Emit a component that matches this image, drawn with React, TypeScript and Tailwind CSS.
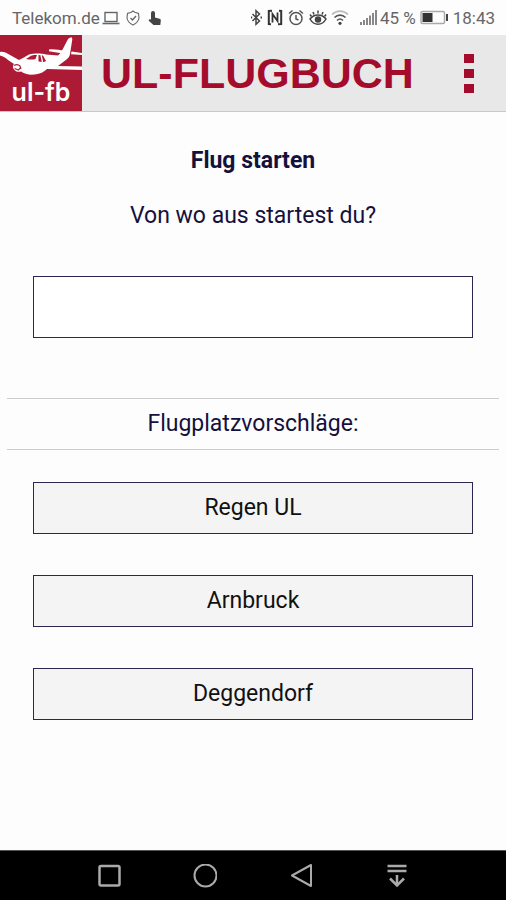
import React, { useState } from "react";

const AIRFIELDS = ["Regen UL", "Arnbruck", "Deggendorf"];

// ─── Status Bar ───────────────────────────────────────────────────────────────
function StatusBar() {
  return (
    <div className="flex items-center justify-between h-[35px] pl-3 pr-[11px] text-[17px] leading-[20px] text-[#666666]">
      <div className="flex items-center gap-[6px]">
        <span>Telekom.de</span>
        <svg className="w-[18px] h-[14px] -ml-1" viewBox="0 0 18 14" fill="none" stroke="currentColor">
          <rect x="3" y="1.5" width="12" height="9" strokeWidth="1.4" />
          <path d="M0.5 12.5h17" strokeWidth="1.6" />
        </svg>
        <svg className="w-[14px] h-[16px]" viewBox="0 0 14 16" fill="none" stroke="currentColor" strokeWidth="1.1">
          <path d="M7 1 8.8 2.3 12.5 3.5 13 8c-.5 3-3 5.500-6 7-3-1.500-5.500-4-6-7l.5-4.500 3.700-1.200z" />
          <path d="m4.500 8 2 2 3.500-4" strokeWidth="1.4" />
        </svg>
        <svg className="w-[14px] h-[16px] ml-[2px]" viewBox="0 0 14 16" fill="#444444">
          <path d="M3 3a2 2 0 0 1 4 0v4.500l4.500 1.300c1 .3 1.500 1 1.300 2L12.300 15H5.500L1 11c-.8-.9.2-2.200 1.200-1.700L3 9.700z" />
        </svg>
      </div>

      <div className="flex items-center">
        <svg className="w-[13px] h-[17px]" viewBox="0 0 13 17" fill="none" stroke="#444444" strokeWidth="1.5">
          <path d="m2.500 5 7 7-3.500 3.300V1.700L9.500 5l-7 7" />
          <path d="M1 8.500h1.200M10.500 8.500h1.500" strokeWidth="2" />
        </svg>
        <svg className="w-[16px] h-[17px] ml-1" viewBox="0 0 16 17" fill="none" stroke="#333333">
          <path d="M5 1.800 1.800 2v13l2.200.2M11 15.200l3.200-.2V2l-2.200-.2" strokeWidth="2" />
          <path d="M5.500 13.500V5l5 7V3.500" strokeWidth="1.800" />
        </svg>
        <svg className="w-[16px] h-[17px] ml-[5px]" viewBox="0 0 16 17" fill="none" stroke="#555555" strokeWidth="1.5">
          <circle cx="8" cy="9.500" r="6" />
          <path d="M1 4.500 4.500 1.500M15 4.500l-3.500-3M8 6v4l2.500 1" />
        </svg>
        <svg className="w-[18px] h-[17px] ml-[5px]" viewBox="0 0 18 17" fill="none" stroke="#444444" strokeWidth="1.5">
          <path d="M1 10c4-5.500 12-5.500 16 0-4 7-12 7-16 0z" />
          <path d="M9 1.500v3M4 3l1 2.500M14 3l-1 2.500M1 5.500l1.500 2M17 5.500l-1.500 2" />
          <circle cx="9" cy="10.500" r="2.500" fill="#444444" />
        </svg>
        <svg className="w-[18px] h-[17px] ml-1" viewBox="0 0 18 17" fill="none" strokeWidth="1.600">
          <path d="M1 5.500c4.500-4.500 11.500-4.500 16 0" stroke="#bbbbbb" />
          <path d="M3.500 8.500c3.200-3.200 7.800-3.200 11 0M6 11.500c1.800-1.800 4.200-1.800 6 0" stroke="#555555" />
          <circle cx="9" cy="14.300" r="1.600" fill="#444444" />
        </svg>
        <svg className="w-[18px] h-[17px] ml-[11px]" viewBox="0 0 18 17" fill="#888888">
          <path d="M0 13h2v3H0zM3 11h2v5H3zM6 9h2v7H6zM9 6.500h2V16H9zM12 4h2v12h-2zM15 1h2v15h-2z" />
        </svg>
        <span className="ml-[2px]">45 %</span>
        <svg className="w-[29px] h-[15px] ml-1" viewBox="0 0 29 15" fill="none">
          <rect x="1" y="1.500" width="23.500" height="12" rx="1.500" stroke="#aaaaaa" strokeWidth="1.500" />
          <rect x="2.500" y="3" width="10" height="9" fill="#333333" />
          <rect x="26" y="4" width="2" height="7" fill="#444444" />
        </svg>
        <span className="ml-1">18:43</span>
      </div>
    </div>
  );
}

// ─── Logo ─────────────────────────────────────────────────────────────────────
function Logo() {
  return (
    <a href="#" aria-label="ul-fb" className="flex flex-col w-[82px] h-[76px] shrink-0 bg-[#ac1a35] text-white">
      <svg className="w-[82px] h-[44px] shrink-0" viewBox="0 0 82 44">
        {/* fuselage, fin and both wings */}
        <path
          fill="#ffffff"
          d="M0 17c2-.5 4 0 6 .8L19 25l4-2 6-3.500c5-1.200 12-1.200 17 0L58 20.500l3-3L67.500 5c1-2 2.500-2.500 4.500-2.500l.3 2L70 19c-.5 2.500-1.500 4-3.500 5.500L58 31l24 .5V35l-35-1c-3 3-7 5-12 5.500-6 .5-11-.5-14-3-4 1-8-1-8-5 0-1 .5-2 1-2.500L8 25c-2-2-5-4-8-4.500z"
        />
        <path fill="#ffffff" d="M49 14.500c5-.5 11 .5 15 1.500l-1 2.500-14-2.200zM71.500 16.500 82 18v2l-11-.8z" />
        {/* cockpit windows */}
        <path fill="#ac1a35" d="m26 24 5-3.300c2-.6 4-.7 6-.7l-1.500 4c-3 1-6 .5-9.500 0zM38.500 20l4.500.5 3 5.500c-2 1.500-5 1-7.500.5z" />
        <path stroke="#ffffff" strokeWidth="1.3" d="m41 20 1.500 7" />
        {/* cowling */}
        <path fill="none" stroke="#ac1a35" strokeWidth="1.2" d="M14 30.500c2-1.200 4.500-1 6 .5l1 3M14.500 33.500l4 1.500 1.500-2" />
      </svg>
      <span className="font-['Inter',sans-serif] font-semibold text-[25px] leading-[26px] text-center">ul-fb</span>
    </a>
  );
}

// ─── Header ───────────────────────────────────────────────────────────────────
function Header() {
  return (
    <header className="flex items-center bg-[#e8e8e8] border-b border-[#c8c8c8]">
      <Logo />
      <h1 className="flex-1 pl-[19px] font-['Liberation_Sans',sans-serif] font-bold text-[43px] leading-[48px] text-[#a50c2c]">
        UL-FLUGBUCH
      </h1>
      <button type="button" aria-label="Menü" className="flex flex-col items-center gap-[6px] px-8">
        <span className="w-[10px] h-[9px] bg-[#a50c2c]" />
        <span className="w-[10px] h-[9px] bg-[#a50c2c]" />
        <span className="w-[10px] h-[9px] bg-[#a50c2c]" />
      </button>
    </header>
  );
}

// ─── Navigation Bar ───────────────────────────────────────────────────────────
function NavBar() {
  return (
    <nav className="grid grid-cols-4 h-[50px] px-[61px] bg-black border-t border-[#555555] text-[#aaaaaa]">
      <button type="button" aria-label="Übersicht" className="flex items-center justify-center">
        <svg className="w-6 h-6" viewBox="0 0 24 24" fill="none" stroke="currentColor" strokeWidth="2.500">
          <rect x="2.500" y="2" width="20" height="19.500" rx="1.500" />
        </svg>
      </button>
      <button type="button" aria-label="Startseite" className="flex items-center justify-center">
        <svg className="w-6 h-6" viewBox="0 0 24 24" fill="none" stroke="currentColor" strokeWidth="2">
          <circle cx="12.500" cy="11.500" r="11" />
        </svg>
      </button>
      <button type="button" aria-label="Zurück" className="flex items-center justify-center">
        <svg className="w-6 h-6" viewBox="0 0 24 24" fill="none" stroke="currentColor" strokeWidth="2" strokeLinejoin="round">
          <path d="M22 1v21L3 11.500z" />
        </svg>
      </button>
      <button type="button" aria-label="Benachrichtigungen" className="flex items-center justify-center">
        <svg className="w-6 h-6" viewBox="0 0 24 24" fill="none" stroke="currentColor" strokeWidth="2.500">
          <path d="M2.500 2h19M2.500 7h19M12 11v10.500M5 14.500l7 7 7-7" />
        </svg>
      </button>
    </nav>
  );
}

export default function App() {
  const [origin, setOrigin] = useState("");

  return (
    <div className="flex flex-col min-h-screen bg-[#fdfdfd] font-['Roboto',sans-serif]">
      <StatusBar />
      <Header />

      <main className="flex-1 px-[7px] text-center text-[23px] leading-[28px] text-[#14113d]">
        <div className="px-[26px] pt-[35px]">
          <h2 className="font-bold">Flug starten</h2>
          <label htmlFor="origin" className="block mt-[27px]">
            Von wo aus startest du?
          </label>
          <input
            id="origin"
            type="text"
            value={origin}
            onChange={(e) => setOrigin(e.target.value)}
            className="block w-full h-[62px] mt-[46px] px-4 bg-white border border-[#2a2850] outline-none"
          />
        </div>

        <h3 className="mt-[60px] py-[11px] border-y border-[#cccccc]">Flugplatzvorschläge:</h3>

        <div className="flex flex-col gap-[41px] px-[26px] py-8">
          {AIRFIELDS.map((name) => (
            <button
              key={name}
              type="button"
              onClick={() => setOrigin(name)}
              className="w-full h-[52px] bg-[#f4f4f4] border border-[#2a2850] text-[#111111]"
            >
              {name}
            </button>
          ))}
        </div>
      </main>

      <NavBar />
    </div>
  );
}
